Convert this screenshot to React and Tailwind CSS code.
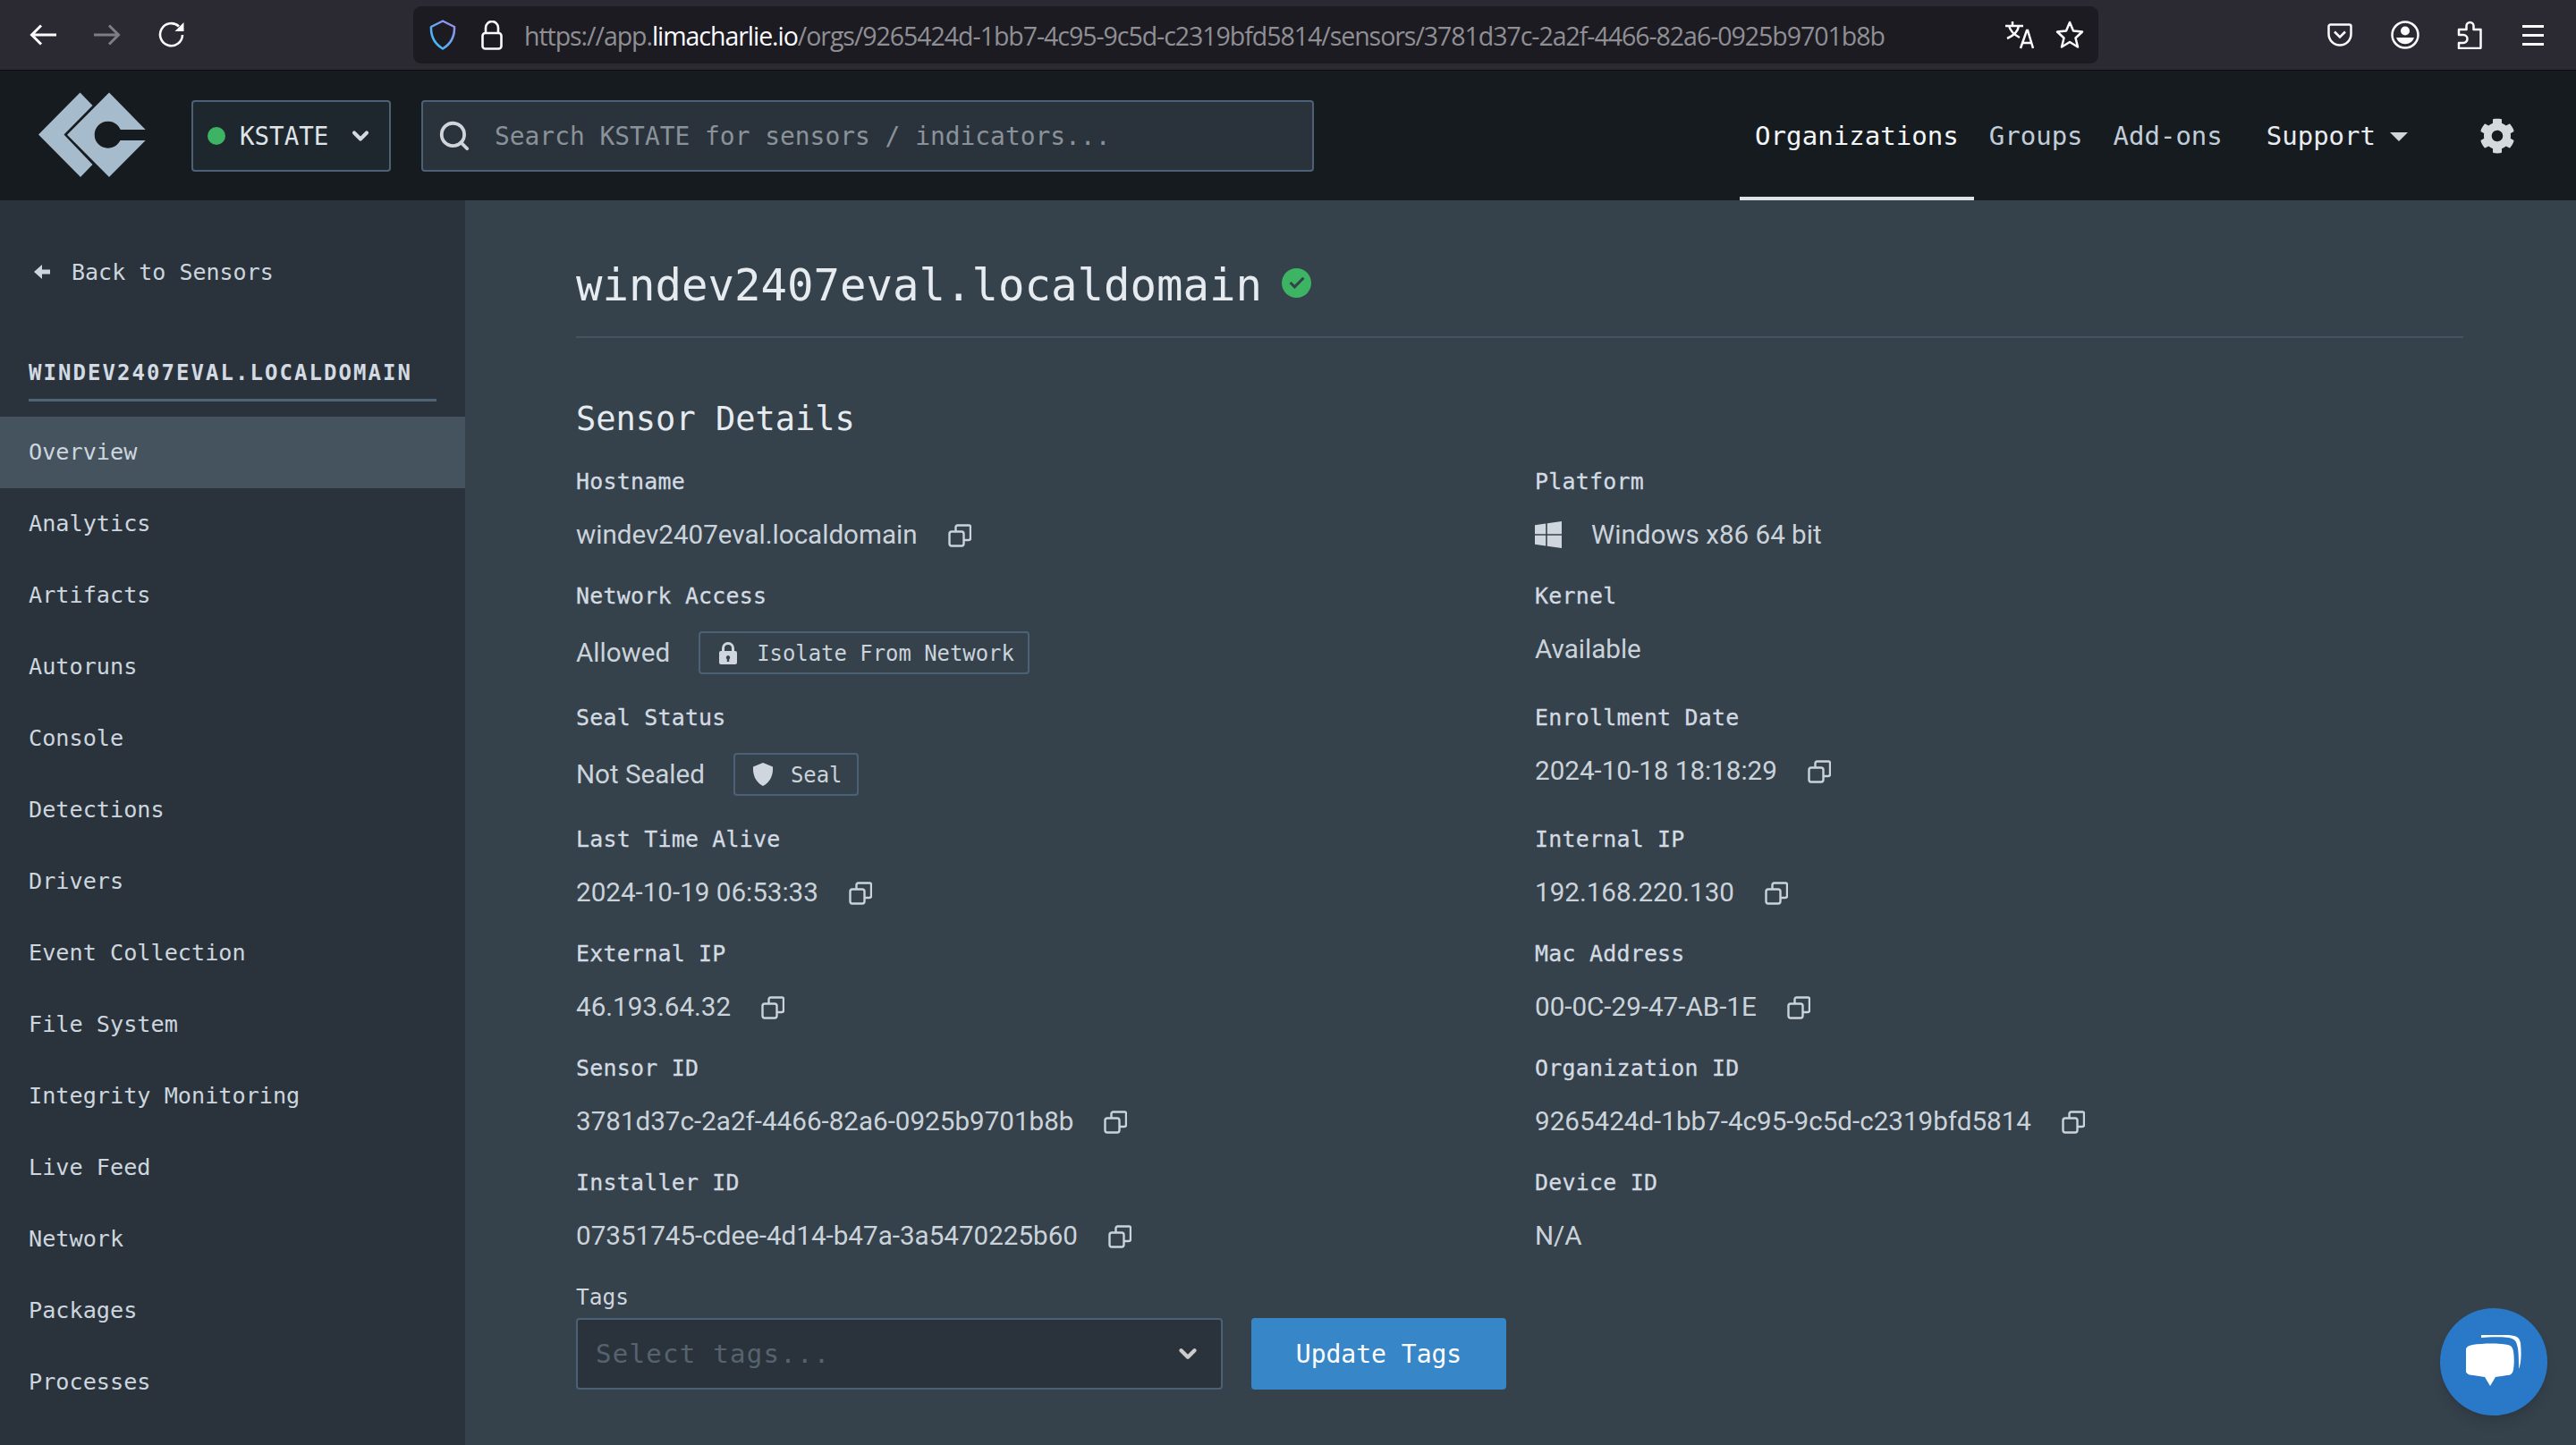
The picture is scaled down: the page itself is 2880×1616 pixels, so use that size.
import { ChevronDown, Search } from 'lucide-react';
import { FaCog } from 'react-icons/fa';

const sideItems = ['Overview', 'Analytics', 'Artifacts', 'Autoruns', 'Console', 'Detections', 'Drivers', 'Event Collection', 'File System', 'Integrity Monitoring', 'Live Feed', 'Network', 'Packages', 'Processes'];

const CopyIcon = () => (
    <svg viewBox="0 0 26 26" className="w-[26px] h-[26px] shrink-0 mt-[2px]" fill="none" stroke="#cbd3da" strokeWidth="2.4" strokeLinejoin="round">
        <rect x="1.5" y="8.5" width="16" height="16" rx="2.5" />
        <path d="M8.5 8.5V3.5a2 2 0 0 1 2-2h13a1.5 1.5 0 0 1 1.5 1.5v13a2 2 0 0 1-2 2h-6" />
    </svg>
);

const LockIcon = () => (
    <svg viewBox="0 0 20 25" className="w-[20px] h-[25px]" fill="#cfd6dd">
        <path fillRule="evenodd" d="M3 10V7a7 7 0 0 1 14 0v3h1a2 2 0 0 1 2 2v11a2 2 0 0 1-2 2H2a2 2 0 0 1-2-2V12a2 2 0 0 1 2-2zm3 0h8V7a4 4 0 0 0-8 0zm4 5a2.3 2.3 0 0 0-1.2 4.2V22h2.4v-2.8A2.3 2.3 0 0 0 10 15z" />
    </svg>
);

const ShieldIcon = () => (
    <svg viewBox="0 0 24 26" className="w-[24px] h-[26px]" fill="#cfd6dd">
        <path d="M12 0 23 4.5c.6 9-2.5 17-11 21.5C3.500 21.500.4 13.500 1 4.500z" />
    </svg>
);

const WindowsIcon = () => (
    <svg viewBox="0 0 30 30" className="w-[30px] h-[30px] shrink-0" fill="#cfd6dd">
        <path d="M0 4.200 12.200 2.500v11.800H0zM13.800 2.300 30 0v14.300H13.800zM0 15.800h12.200v11.800L0 25.800zM13.800 15.800H30V30l-16.200-2.300z" />
    </svg>
);

const Label = ({ children }) => (
    <div className="h-[30px] flex items-center text-[24.900px] tracking-[0.250px] text-[#d3dae2] [-webkit-text-stroke:0.3px_#d3dae2]">{children}</div>
);

const Value = ({ children, copy }) => (
    <div className="h-[40px] flex items-center gap-[34px] [font-family:Roboto,sans-serif] text-[29.600px] text-[#cbd3da]">
        <span>{children}</span>
        {copy && <CopyIcon />}
    </div>
);

const ActionValue = ({ text, icon, label, btnClass }) => (
    <div className="h-[48px] flex items-center gap-[32px]">
        <span className="[font-family:Roboto,sans-serif] text-[29.600px] text-[#cbd3da]">{text}</span>
        <button className={`h-[48px] flex items-center border-2 border-[#4d6176] rounded-[4px] text-[23.900px] text-[#cbd3da] ${btnClass}`}>
            {icon}
            <span className="pt-[3px]">{label}</span>
        </button>
    </div>
);

const Field = ({ label, children }) => (
    <div className="pb-[34px]">
        <Label>{label}</Label>
        <div className="mt-[24px]">{children}</div>
    </div>
);

function BrowserBar() {
    return (
        <div className="h-[79px] bg-[#2b2a33] border-b border-[#0c0c0f] flex items-center shrink-0 relative">
            <div className="w-[462px] flex items-center shrink-0 pl-[33px]">
                <svg viewBox="0 0 30 24" className="w-[30px] h-[24px]" fill="none" stroke="#fbfbfe" strokeWidth="3"><path d="M30 12H3M13 1.500 2.500 12 13 22.500" /></svg>
                <svg viewBox="0 0 30 24" className="w-[30px] h-[24px] ml-[42px]" fill="none" stroke="#7e7d85" strokeWidth="3"><path d="M0 12h27M17 1.500 27.500 12 17 22.500" /></svg>
                <svg viewBox="0 0 30 30" className="w-[30px] h-[30px] ml-[42px]" fill="none" stroke="#fbfbfe" strokeWidth="2.600"><path d="M27 15a12.500 12.500 0 1 1-4-9.500" /><path d="M28.500 1v10h-10z" fill="#fbfbfe" stroke="none" /></svg>
            </div>
            <div className="w-[1884px] h-[64px] bg-[#1c1b22] rounded-[9px] flex items-center shrink-0 pl-[18px]">
                <svg viewBox="0 0 30 34" className="w-[30px] h-[34px] shrink-0" fill="none" strokeWidth="2.500">
                    <defs>
                        <linearGradient id="shieldGrad" x1="1" y1="0" x2="0" y2="1"><stop offset="0" stopColor="#9d8df0" /><stop offset="1" stopColor="#34c0f5" /></linearGradient>
                    </defs>
                    <path d="M15 1.500 28 8c.5 11-4 19-13 24.500C6 27 1.500 19 2 8z" stroke="url(#shieldGrad)" strokeLinejoin="round" />
                </svg>
                <svg viewBox="0 0 24 33" className="w-[24px] h-[33px] ml-[28px] shrink-0" fill="none" stroke="#fbfbfe" strokeWidth="2.600"><rect x="1.500" y="14" width="21" height="17.500" rx="3" /><path d="M5 14V8a7 7 0 0 1 14 0v6" /></svg>
                <div className="ml-[24px] pt-[2px] text-[28.500px] [font-family:'Open_Sans',sans-serif] tracking-[-1.040px] text-[#8f8f94] whitespace-nowrap">
                    https://app.<span className="text-[#fbfbfe]">limacharlie.io</span>/orgs/9265424d-1bb7-4c95-9c5d-c2319bfd5814/sensors/3781d37c-2a2f-4466-82a6-0925b9701b8b
                </div>
                <div className="ml-auto flex items-center gap-[24px] pr-[16px]">
                    <svg viewBox="0 0 32 32" className="w-[32px] h-[32px]" fill="none" stroke="#fbfbfe" strokeWidth="2.500"><path d="M0 6h20M8 1v5M4 6c2 7 8 11 12 13M15 6c-1 6-6 11-13 14M17 31l7-20h1l6 20M19.500 25h10" /></svg>
                    <svg viewBox="0 0 32 32" className="w-[32px] h-[32px]" fill="none" stroke="#fbfbfe" strokeWidth="2.500" strokeLinejoin="round"><path d="M16 2l4 9.500 10 1-7.500 7 2.500 10-9-5.500-9 5.500 2.500-10L2 12.500l10-1z" /></svg>
                </div>
            </div>
            <div className="ml-[258px] flex items-center">
                <svg viewBox="0 0 28 26" className="w-[28px] h-[26px] -ml-[2px]" fill="none" stroke="#fbfbfe" strokeWidth="2.500"><path d="M3.500 1.500h21a2 2 0 0 1 2 2V12a12.500 12.500 0 0 1-25 0V3.500a2 2 0 0 1 2-2zM8 9.500l6 6 6-6" /></svg>
                <svg viewBox="0 0 32 32" className="w-[32px] h-[32px] ml-[43px]" fill="none" stroke="#fbfbfe" strokeWidth="2.500"><circle cx="16" cy="16" r="14.500" /><circle cx="16" cy="11.500" r="5" fill="#fbfbfe" stroke="none" /><path d="M6 19h20a10.500 10.500 0 0 1-20 0z" fill="#fbfbfe" stroke="none" /></svg>
                <svg viewBox="0 0 28 32" className="w-[28px] h-[32px] ml-[42px]" fill="none" stroke="#fbfbfe" strokeWidth="2.500" strokeLinejoin="round"><path d="M2 16V10h8.500V6a4 4 0 0 1 8 0v4h8v20a1 1 0 0 1-1 1H2v-6h5a3 3 0 0 0 0-9z" /></svg>
                <div className="ml-[45px] w-[24px] flex flex-col gap-[7px]">
                    <div className="h-[3px] bg-[#fbfbfe]" />
                    <div className="h-[3px] bg-[#fbfbfe]" />
                    <div className="h-[3px] bg-[#fbfbfe]" />
                </div>
            </div>
        </div>
    );
}

function TopNav() {
    return (
        <div className="h-[145px] bg-[#161b1f] flex items-center shrink-0 relative">
            <svg viewBox="0 0 150 120" className="absolute left-[30px] top-[11px] w-[150px] h-[120px]">
                <polygon fill="#a6bbcc" points="59.500,13.500 73.500,28 41.500,60.500 73.500,94 60,108 13,60.500" />
                <polygon fill="#a6bbcc" points="92,13.500 132.700,55 100,55 100,67 132.700,67 92,108 45,60.700" />
                <circle cx="90.700" cy="60.700" r="15" fill="#161b1f" />
            </svg>
            <div className="ml-[214px] w-[223px] h-[80px] bg-[#1f272e] border-2 border-[#4d6176] rounded-[4px] flex items-center pl-[16px] shrink-0">
                <span className="w-[20px] h-[20px] rounded-full bg-[#3cb464]" />
                <span className="ml-[16px] pt-[2px] text-[27.500px] text-[#dfe4e9]">KSTATE</span>
                <ChevronDown className="ml-[22px] w-[28px] h-[28px] text-[#d4d9de]" strokeWidth={3.5} />
            </div>
            <div className="ml-[34px] w-[998px] h-[80px] bg-[#2a333c] border-2 border-[#4d6176] rounded-[4px] flex items-center pl-[16px] shrink-0">
                <Search className="w-[38px] h-[38px] text-[#cfd5da]" strokeWidth={2.4} />
                <span className="ml-[26px] pt-[2px] text-[27.900px] text-[#8a9299]">Search KSTATE for sensors / indicators...</span>
            </div>
            <div className="ml-auto flex items-center h-full">
                <div className="h-full px-[17px] flex items-center text-[29.100px] text-[#f3f5f7] border-b-4 border-[#dde2e7] pt-[7px]">Organizations</div>
                <div className="h-full px-[17px] pt-[3px] flex items-center text-[29px] text-[#c0ccd8]">Groups</div>
                <div className="h-full px-[17px] pt-[3px] flex items-center text-[29px] text-[#c0ccd8]">Add-ons</div>
                <div className="ml-[32px] pt-[3px] flex items-center gap-[16px] text-[29px] text-[#e8ecf0]">
                    Support
                    <span className="w-0 h-0 border-x-[10px] border-x-transparent border-t-[10px] border-t-[#cfd5da]" />
                </div>
                <FaCog className="ml-[80px] mr-[68px] w-[40px] h-[40px] text-[#d4d9de]" />
            </div>
        </div>
    );
}

function Sidebar() {
    return (
        <div className="w-[520px] shrink-0 bg-[#2a333c] overflow-hidden">
            <div className="h-[160px] pl-[38px] flex items-center gap-[24px] text-[25px] text-[#cdd6de]">
                <svg viewBox="0 0 18 16" className="w-[18px] h-[16px]" fill="#cdd6de"><path d="M9 0v5.500h9v5H9V16L0 8z" /></svg>
                <span className="pt-[2px]">Back to Sensors</span>
            </div>
            <div className="mx-[32px] w-[456px] h-[65px] border-b-[3px] border-[#506477] text-[24px] font-bold tracking-[2.050px] text-[#d3dae2] pt-[15px]">
                WINDEV2407EVAL.LOCALDOMAIN
            </div>
            <div className="mt-[17px]">
                {sideItems.map((item, i) => (
                    <div key={item} className={`h-[80px] pl-[32px] flex items-center text-[25.200px] text-[#cdd6de] ${i === 0 ? 'bg-[#45535f]' : ''}`}>
                        {item}
                    </div>
                ))}
            </div>
        </div>
    );
}

export default function App() {
    return (
        <div className="w-[2880px] h-[1616px] overflow-hidden flex flex-col bg-[#35414b] [font-family:'DejaVu_Sans_Mono',monospace] relative">
            <BrowserBar />
            <TopNav />
            <div className="flex-1 flex min-h-0">
                <Sidebar />
                <div className="flex-1 pl-[124px] pr-[126px] pt-[70px]">
                    <div className="flex items-center gap-[22px] h-[48px] text-[49px] text-[#e6ebf0]">
                        <span className="pt-[3px]">windev2407eval.localdomain</span>
                        <span className="w-[33px] h-[33px] rounded-full bg-[#3cb464] flex items-center justify-center -mt-[4px]">
                            <svg viewBox="0 0 20 16" className="w-[18px] h-[14px]" fill="none" stroke="#35414b" strokeWidth="3.600"><path d="M1.500 8l5.500 5.500L18.500 2" /></svg>
                        </span>
                    </div>
                    <div className="mt-[34px] h-[2px] bg-[#47545f]" />
                    <div className="mt-[67px] h-[44px] pt-[3px] flex items-center text-[37px] text-[#e6ebf0]">Sensor Details</div>
                    <div className="mt-[35px] grid grid-cols-[1072px_1fr]">
                        <Field label="Hostname"><Value copy>windev2407eval.localdomain</Value></Field>
                        <Field label="Platform">
                            <div className="h-[40px] flex items-center gap-[33px] [font-family:Roboto,sans-serif] text-[29.600px] text-[#cbd3da]">
                                <WindowsIcon />
                                Windows x86 64 bit
                            </div>
                        </Field>
                        <Field label="Network Access"><ActionValue text="Allowed" icon={<LockIcon />} label="Isolate From Network" btnClass="pl-[21px] pr-[15px] gap-[22px]" /></Field>
                        <Field label="Kernel"><Value>Available</Value></Field>
                        <Field label="Seal Status"><ActionValue text="Not Sealed" icon={<ShieldIcon />} label="Seal" btnClass="pl-[19px] pr-[16px] gap-[19px]" /></Field>
                        <Field label="Enrollment Date"><Value copy>2024-10-18 18:18:29</Value></Field>
                        <Field label="Last Time Alive"><Value copy>2024-10-19 06:53:33</Value></Field>
                        <Field label="Internal IP"><Value copy>192.168.220.130</Value></Field>
                        <Field label="External IP"><Value copy>46.193.64.32</Value></Field>
                        <Field label="Mac Address"><Value copy>00-0C-29-47-AB-1E</Value></Field>
                        <Field label="Sensor ID"><Value copy>3781d37c-2a2f-4466-82a6-0925b9701b8b</Value></Field>
                        <Field label="Organization ID"><Value copy>9265424d-1bb7-4c95-9c5d-c2319bfd5814</Value></Field>
                        <Field label="Installer ID"><Value copy>07351745-cdee-4d14-b47a-3a5470225b60</Value></Field>
                        <Field label="Device ID"><Value>N/A</Value></Field>
                    </div>
                    <div className="h-[30px] flex items-center text-[24.500px] text-[#cfd6dd]">Tags</div>
                    <div className="mt-[8px] flex gap-[32px]">
                        <div className="w-[723px] h-[80px] bg-[#2a333c] border-2 border-[#4d6176] rounded-[4px] flex items-center pl-[20px] pr-[22px]">
                            <span className="pt-[2px] text-[29px] tracking-[1.300px] text-[#56636f]">Select tags...</span>
                            <ChevronDown className="ml-auto w-[30px] h-[30px] text-[#cccccc]" strokeWidth={3.5} />
                        </div>
                        <button className="w-[285px] h-[80px] pt-[2px] bg-[#3787c8] rounded-[4px] text-[28px] text-white">Update Tags</button>
                    </div>
                </div>
            </div>
            <div className="absolute left-[2728px] top-[1463px] w-[120px] h-[120px] rounded-full bg-[#2a79c8] shadow-lg flex items-center justify-center">
                <svg viewBox="0 0 62 60" className="w-[62px] h-[60px]" fill="#ffffff">
                    <path d="M11 0c14-1 28-1 37 1 4 1 6 3 7 8 1 10 1 22-2 29 0-11 0-21-2-27-1-5-4-7-9-8C34 2 20 2 11 3z" transform="translate(6 0)" />
                    <path d="M8 10c13-2 29-2 40 0 4 1 5 3 6 7 1 7 1 14 0 21-1 4-3 6-7 6l-13 2-6 10-6-10-13-2c-5 0-8-2-9-6-1-7-1-14 0-21 1-4 3-6 8-7z" transform="translate(-1 1)" />
                </svg>
            </div>
        </div>
    );
}
